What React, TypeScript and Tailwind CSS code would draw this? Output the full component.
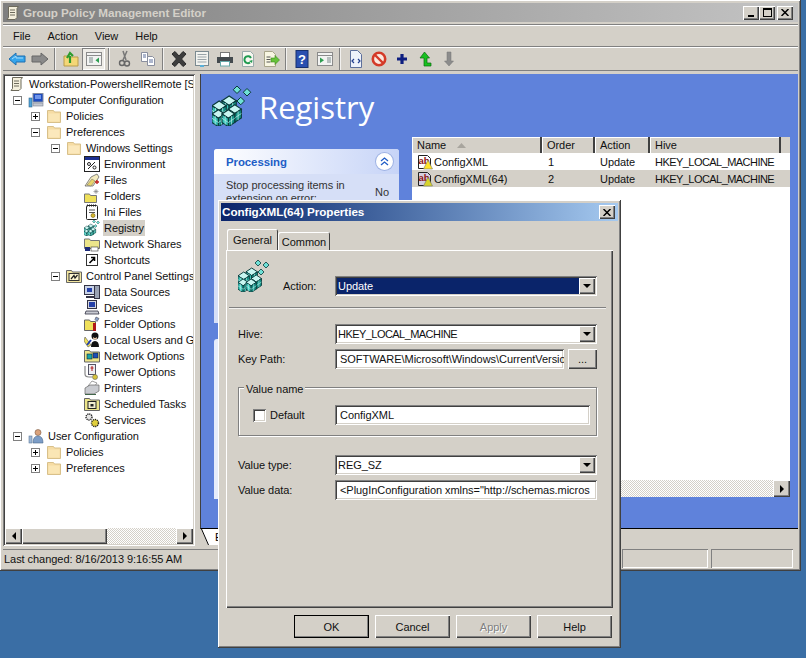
import React from "react";

const raised = "shadow-[inset_1px_1px_0_#fff,inset_-1px_-1px_0_#404040,inset_-2px_-2px_0_#808080]";
const sunken = "shadow-[inset_1px_1px_0_#808080,inset_-1px_-1px_0_#fff,inset_2px_2px_0_#404040,inset_-2px_-2px_0_#d4d0c8]";
const dither = "bg-[repeating-conic-gradient(#d4d0c8_0_25%,#fff_0_50%)] bg-[length:2px_2px]";

function Cube({ x, y, s = 1 }: { x: number; y: number; s?: number }) {
  return (
    <g transform={`translate(${x} ${y}) scale(${s})`} stroke="#0a3a3a" strokeWidth={0.5}>
      <path d="M0 2 L3 0 L6 2 L3 4 Z" fill="#c8f6f1" />
      <path d="M0 2 L3 4 V8 L0 6 Z" fill="#38c4b8" />
      <path d="M6 2 L3 4 V8 L6 6 Z" fill="#149084" />
      <path d="M1.5 3 V7 M0 4 L3 6 M4.5 3 V7 M6 4 L3 6" stroke="#b8f2ec" strokeWidth={0.35} fill="none" />
    </g>
  );
}

function RegistryIcon({ size = 16 }: { size?: number }) {
  return (
    <svg width={size} height={size} viewBox="0 0 32 32" className="shrink-0">
      <g stroke="#0a3a3a" strokeWidth={0.8}>
        <path d="M17 3 L20 0 L23 3 L20 6 Z" fill="#6fe0d6" />
        <path d="M25 5 L28 2 L31 5 L28 8 Z" fill="#6fe0d6" />
        <path d="M20 12 L23 9 L26 12 L23 15 Z" fill="#6fe0d6" />
      </g>
      <Cube x={8} y={8} s={1.9} />
      <Cube x={0} y={12} s={1.9} />
      <Cube x={13} y={15} s={1.75} />
      <Cube x={0} y={19} s={1.7} />
      <Cube x={8} y={19} s={1.7} />
    </svg>
  );
}

function Folder({ open }: { open?: boolean }) {
  return (
    <svg width="16" height="16" viewBox="0 0 16 16" className="shrink-0">
      <path d="M1.5 2.5 h6 l1 1.5 h6 v10.5 h-13 z" fill="#f6dca4" stroke="#d8c08a" />
      <path d="M2.5 5.5 h11 v8 h-11 z" fill={open ? "#fbe8bc" : "#fae6b5"} />
    </svg>
  );
}

function Expander({ open }: { open: boolean }) {
  return (
    <span className="relative flex h-[9px] w-[9px] shrink-0 items-center justify-center border border-[#808080] bg-white">
      <span className="absolute h-px w-[5px] bg-black" />
      {!open && <span className="absolute h-[5px] w-px bg-black" />}
    </span>
  );
}

function Scroll() {
  return (
    <svg width="16" height="16" viewBox="0 0 16 16" className="shrink-0">
      <path d="M3.5 1.5 h10 l-1.5 2 v9 l-2 2 h-8 l1.5 -2 z" fill="#f4efdc" stroke="#6d6a5c" />
      <path d="M5 5 h5 M5 7.5 h5 M5 10 h5" stroke="#6d6a5c" />
    </svg>
  );
}

function Computer({ user }: { user?: boolean }) {
  return (
    <svg width="16" height="16" viewBox="0 0 16 16" className="shrink-0">
      {user ? (
        <>
          <circle cx="10" cy="4.5" r="3" fill="#d9a27c" stroke="#7a5a44" strokeWidth="0.6" />
          <path d="M5 15 q0 -7 5 -7 q5 0 5 7 z" fill="#7c9dc7" stroke="#49688c" strokeWidth="0.6" />
          <rect x="1" y="8" width="3" height="7" fill="#9db7d6" stroke="#607c9c" strokeWidth="0.6" />
        </>
      ) : (
        <>
          <rect x="5" y="1.5" width="10" height="8.5" fill="#1e4cc0" stroke="#808aa0" />
          <path d="M7 3 h6 v4 h-6z" fill="#6f95ea" />
          <rect x="5" y="11" width="10" height="3" fill="#c4c8d0" stroke="#7b8090" strokeWidth="0.6" />
          <rect x="1" y="6" width="3" height="9" fill="#4ea3d8" stroke="#33668c" strokeWidth="0.6" />
        </>
      )}
    </svg>
  );
}

type LeafKind = "env" | "files" | "folders" | "ini" | "reg" | "net" | "short" | "data" | "dev" | "fopt" | "users" | "nopt" | "popt" | "print" | "task" | "cpl" | "svc";

function Leaf({ kind }: { kind: LeafKind }) {
  const base = { width: 16, height: 16, viewBox: "0 0 16 16", className: "shrink-0" };
  switch (kind) {
    case "env":
      return (
        <svg {...base}>
          <rect x="0.5" y="0.5" width="15" height="15" fill="#fff" stroke="#222" />
          <rect x="1" y="1" width="14" height="3" fill="#1b2f8f" />
          <path d="M4 13 L11 6" stroke="#222" />
          <circle cx="5" cy="8" r="1.5" fill="none" stroke="#222" />
          <circle cx="10.5" cy="11.5" r="1.5" fill="none" stroke="#222" />
        </svg>
      );
    case "files":
      return (
        <svg {...base}>
          <path d="M1 14 L7 5 L13 2 L15 5 L9 14 Z" fill="#f5ecc0" stroke="#555" strokeWidth="0.7" />
          <path d="M3 13 L8 7 L11 9 L7 14 Z" fill="#e8d46a" stroke="#666" strokeWidth="0.5" />
          <path d="M11 10 h4 M13 8 v4" stroke="#c02020" strokeWidth="1.4" />
        </svg>
      );
    case "folders":
      return (
        <svg {...base}>
          <path d="M0.5 6 h5 l1 1.5 h6 v7 h-12 z" fill="#efe05a" stroke="#777" />
          <path d="M12 1 v5 M9.5 3.5 h5 M10.3 1.8 l3.4 3.4 M13.7 1.8 l-3.4 3.4" stroke="#888" strokeWidth="0.7" />
        </svg>
      );
    case "ini":
      return (
        <svg {...base}>
          <rect x="2.5" y="1.5" width="11" height="14" rx="1" fill="#fff" stroke="#222" />
          <path d="M3 1.5 h10" stroke="#222" strokeDasharray="1 1" strokeWidth="2" />
          <path d="M5 6 h6 M5 8.5 h6" stroke="#555" />
          <circle cx="9" cy="11.5" r="2" fill="#d8b82c" stroke="#6d5a10" strokeWidth="0.6" />
        </svg>
      );
    case "reg":
      return <RegistryIcon />;
    case "net":
      return (
        <svg {...base}>
          <path d="M0.5 3 h5 l1 1.5 h9 v8 h-15 z" fill="#ece58a" stroke="#777" />
          <rect x="1" y="11" width="5" height="4" fill="#1d2b7a" />
          <rect x="7" y="11" width="7" height="4" fill="#fff" stroke="#333" strokeWidth="0.6" />
        </svg>
      );
    case "short":
      return (
        <svg {...base}>
          <rect x="2.5" y="2.5" width="11" height="11" fill="#fff" stroke="#333" />
          <path d="M5.5 11 L10 6.5 M7 5.5 h3.5 v3.5" stroke="#000" strokeWidth="1.6" fill="none" />
        </svg>
      );
    case "data":
      return (
        <svg {...base}>
          <rect x="0.5" y="1.5" width="10" height="9" fill="#c9d3e8" stroke="#334" />
          <rect x="3" y="4" width="5" height="4" fill="#2440a8" />
          <rect x="10.5" y="1.5" width="5" height="13" fill="#9aa3b4" stroke="#334" />
          <path d="M2 13 h8" stroke="#334" strokeWidth="2" />
        </svg>
      );
    case "dev":
      return (
        <svg {...base}>
          <rect x="3.5" y="0.5" width="9" height="8" fill="#d5d7df" stroke="#334" />
          <rect x="5" y="2" width="6" height="5" fill="#2440a8" />
          <path d="M2 11 h12 l1 3 h-14 z" fill="#c8cad2" stroke="#334" strokeWidth="0.8" />
        </svg>
      );
    case "fopt":
      return (
        <svg {...base}>
          <path d="M0.5 4 h5 l1 1.5 h5 v9 h-11 z" fill="#efe05a" stroke="#666" />
          <path d="M12 1 l3 1.5 l-2 3 l-2 -2 z" fill="#8aa3c8" stroke="#445" strokeWidth="0.6" />
          <rect x="9" y="7" width="3" height="8" fill="#b01818" />
        </svg>
      );
    case "users":
      return (
        <svg {...base}>
          <path d="M1 5 L7 13 L4 15 L0 9 z" fill="#efe05a" stroke="#555" strokeWidth="0.6" />
          <circle cx="11" cy="4" r="3.5" fill="#111" />
          <path d="M7 15 q0 -6 4 -6 q4 0 4 6 z" fill="#111" />
          <path d="M9 5 q2 2 4 0 v1.5 q-2 2 -4 0z" fill="#e8c7a8" />
          <path d="M3 13 l4 -5" stroke="#2440a8" strokeWidth="2" />
        </svg>
      );
    case "nopt":
      return (
        <svg {...base}>
          <path d="M0.5 2.5 h5 l1 1.5 h9 v10 h-15 z" fill="#ece58a" stroke="#666" />
          <rect x="3" y="6" width="5" height="5" fill="#1aa5a5" stroke="#123" strokeWidth="0.6" />
          <rect x="9" y="5" width="5" height="5" fill="#1d4db5" stroke="#123" strokeWidth="0.6" />
        </svg>
      );
    case "popt":
      return (
        <svg {...base}>
          <path d="M1 2 v8 q0 3 4 3 h3" stroke="#888" fill="none" strokeWidth="1.2" />
          <rect x="4.5" y="0.5" width="7" height="10" fill="#eeeef2" stroke="#556" />
          <path d="M8 2 v5 M6.5 4 h3" stroke="#b01818" />
          <circle cx="11" cy="13" r="2.5" fill="#d8c33c" stroke="#665" strokeWidth="0.6" />
        </svg>
      );
    case "print":
      return (
        <svg {...base}>
          <path d="M4 6 L8 1 L13 3 L10 7 z" fill="#fff" stroke="#777" strokeWidth="0.7" />
          <path d="M1 8 L6 5 H15 V11 L10 14 H1 Z" fill="#c9cbd0" stroke="#666" strokeWidth="0.7" />
          <path d="M1 14.5 h11" stroke="#40664a" />
        </svg>
      );
    case "task":
      return (
        <svg {...base}>
          <path d="M0.5 2.5 h5 l1 1.5 h9 v10.5 h-15 z" fill="#ece58a" stroke="#666" />
          <rect x="4" y="5.5" width="8" height="7" fill="#f2efd0" stroke="#222" />
          <rect x="6.5" y="8" width="3" height="2.5" fill="#222" />
        </svg>
      );
    case "cpl":
      return (
        <svg {...base}>
          <path d="M0.5 2.5 h5 l1 1.5 h9 v10.5 h-15 z" fill="#f3e6a0" stroke="#666" />
          <rect x="3" y="5.5" width="10" height="7" fill="#fff7d0" stroke="#333" />
          <path d="M5 11 L8 7.5 L9 10 L11.5 7" stroke="#222" fill="none" strokeWidth="1.2" />
        </svg>
      );
    case "svc":
      return (
        <svg {...base}>
          <circle cx="5" cy="5" r="3" fill="#e6e6e6" stroke="#222" strokeWidth="1.4" strokeDasharray="1.2 0.8" />
          <circle cx="11" cy="11" r="3.5" fill="#e0cf3c" stroke="#222" strokeWidth="1.4" strokeDasharray="1.2 0.8" />
        </svg>
      );
  }
}

function Row({ indent, expander, icon, label, selected }: { indent: string; expander?: boolean; icon: React.ReactNode; label: string; selected?: boolean }) {
  return (
    <div className={`flex h-4 items-center whitespace-nowrap ${indent}`}>
      {expander !== undefined && (
        <span className="mr-[6px]">
          <Expander open={expander} />
        </span>
      )}
      {icon}
      <span className={`ml-[3px] px-px ${selected ? "bg-[#d4d0c8]" : ""}`}>{label}</span>
    </div>
  );
}

function Arrow({ dir }: { dir: "l" | "r" | "d" }) {
  const d = dir === "l" ? "M5 0 V8 L1 4 Z" : dir === "r" ? "M1 0 V8 L5 4 Z" : "M0 1 H8 L4 5 Z";
  return (
    <svg width={dir === "d" ? 8 : 6} height={dir === "d" ? 6 : 8} viewBox={dir === "d" ? "0 0 8 6" : "0 0 6 8"}>
      <path d={d} fill="#000" />
    </svg>
  );
}

function SBtn({ dir, w = "w-[17px]" }: { dir: "l" | "r" | "d"; w?: string }) {
  return <div className={`flex shrink-0 items-center justify-center bg-[#d4d0c8] ${w} ${raised}`}><Arrow dir={dir} /></div>;
}

const Sep = () => (
  <div className="flex h-[22px] w-2 shrink-0 justify-center">
    <div className="h-full w-[2px] border-l border-[#808080] bg-white/70" />
  </div>
);

const Tb = ({ children, active }: { children: React.ReactNode; active?: boolean }) => (
  <div className={`flex h-[22px] w-[23px] shrink-0 items-center justify-center ${active ? "bg-[#eeece7] shadow-[inset_1px_1px_0_#808080,inset_-1px_-1px_0_#fff]" : ""}`}>{children}</div>
);

const Ico = ({ children }: { children: React.ReactNode }) => (
  <svg width="18" height="18" viewBox="0 0 18 18">{children}</svg>
);

function Toolbar() {
  return (
    <div className="flex h-[23px] items-center pl-[2px]">
      <Tb><Ico><path d="M1 9 L8 3 V6 H17 V12 H8 V15 Z" fill="#35a5ec" stroke="#1f6fb0" /><path d="M4 9 L8 6 V8 H15" stroke="#a8dcfa" fill="none" /></Ico></Tb>
      <Tb><Ico><path d="M17 9 L10 3 V6 H1 V12 H10 V15 Z" fill="#8a8a8a" stroke="#666" /></Ico></Tb>
      <Sep />
      <Tb><Ico><path d="M2 6 h5 l1 1 h8 v9 h-14 z" fill="#f4d777" stroke="#b99c4c" /><path d="M8 13 V6 M5 8 L8 3 L11 6" stroke="#2c9c2c" strokeWidth="2.2" fill="none" /></Ico></Tb>
      <Tb active><Ico><rect x="1.5" y="2.5" width="15" height="13" fill="#f2f3f2" stroke="#8b8b8b" /><path d="M1.5 5.5 h15" stroke="#8b8b8b" /><path d="M4 8 h4 M4 10 h4 M4 12 h4" stroke="#7a8a8a" /><path d="M14 7.5 V13 L10.5 10.2 Z" fill="#2d9d50" /></Ico></Tb>
      <Sep />
      <Tb><Ico><path d="M11 1 L7 10 M7 1 L10 10" stroke="#777" strokeWidth="1.5" /><circle cx="6" cy="13" r="2.5" fill="none" stroke="#666" strokeWidth="1.4" /><circle cx="11" cy="13.5" r="2.5" fill="none" stroke="#666" strokeWidth="1.4" /></Ico></Tb>
      <Tb><Ico><path d="M2.5 2.5 h6 v9 h-6 z" fill="#fff" stroke="#8a8f9f" /><path d="M8.5 6.5 h5 l2 2 v7 h-7 z" fill="#fff" stroke="#8a8f9f" /><path d="M4 5 h3 M4 7 h3 M10 10 h4 M10 12 h4" stroke="#5d6f9b" /></Ico></Tb>
      <Sep />
      <Tb><Ico><path d="M2 4 L5 1.5 L9 6 L13 1.5 L16 4 L11.5 9 L16 14 L13 16.5 L9 12 L5 16.5 L2 14 L6.5 9 Z" fill="#3d3d3d" stroke="#2a2a2a" /></Ico></Tb>
      <Tb><Ico><rect x="2.5" y="1.5" width="13" height="14" fill="#f3f4f0" stroke="#7b8a90" /><path d="M4.5 4.5 h9 M4.5 7 h9 M4.5 9.5 h9 M4.5 12 h9" stroke="#99a3a8" /><rect x="7" y="15" width="4" height="2" fill="#59b0d8" /></Ico></Tb>
      <Tb><Ico><rect x="4.5" y="2.5" width="9" height="5" fill="#fff" stroke="#777" /><rect x="1" y="7" width="16" height="6" fill="#444a4e" /><rect x="4.5" y="11.5" width="9" height="4.5" fill="#fff" stroke="#6aa" /></Ico></Tb>
      <Tb><Ico><path d="M3.5 1.5 h8 l3 3 v12 h-11 z" fill="#f7f7f0" stroke="#9aa" /><path d="M12 8 a3.5 3.5 0 1 0 -1 4.5" stroke="#1f9a4f" strokeWidth="2" fill="none" /><path d="M10 11 l3 2 l.5 -3 z" fill="#1f9a4f" /></Ico></Tb>
      <Tb><Ico><path d="M2.5 1.5 h8 l3 3 v12 h-11 z" fill="#f8f6e2" stroke="#a8a58a" /><path d="M4.5 7 h4 M4.5 9.5 h4 M4.5 12 h4" stroke="#555" /><path d="M9 8 h4 V5.5 L17.5 10 L13 14.5 V12 H9 Z" fill="#66c23a" stroke="#3c8a1c" strokeWidth="0.6" /></Ico></Tb>
      <Sep />
      <Tb><Ico><rect x="3" y="0.5" width="12" height="17" fill="#2a4fb0" stroke="#17306f" /><text x="9" y="14" textAnchor="middle" fontFamily="Liberation Sans" fontWeight="700" fontSize="13" fill="#fff">?</text></Ico></Tb>
      <Tb><Ico><rect x="1.5" y="2.5" width="15" height="13" fill="#f2f3f2" stroke="#8b8b8b" /><path d="M1.5 5.5 h15" stroke="#8b8b8b" /><path d="M11 8 h4 M11 10 h4 M11 12 h4" stroke="#7a8a8a" /><path d="M4 7.5 V13 L8 10.2 Z" fill="#2d9d50" /></Ico></Tb>
      <Sep />
      <Tb><Ico><path d="M3.5 0.5 h7 l4 4 v13 h-11 z" fill="#eef2fa" stroke="#5d6f9b" /><path d="M7 9 L5 11 L7 13 M11 9 L13 11 L11 13" stroke="#23408f" strokeWidth="1.2" fill="none" /></Ico></Tb>
      <Tb><Ico><circle cx="9" cy="9" r="6.2" fill="#fbe9e0" stroke="#d43a28" strokeWidth="2.6" /><path d="M5 5 L13 13" stroke="#d43a28" strokeWidth="2.4" /></Ico></Tb>
      <Tb><Ico><path d="M9 4 V14 M4 9 H14" stroke="#0e1e80" strokeWidth="3.2" /></Ico></Tb>
      <Tb><Ico><path d="M8.5 2 L13.5 8 H11 V13 H15 V16 H8 V8 H4 Z" fill="#18c020" stroke="#0c6a10" strokeWidth="0.7" /></Ico></Tb>
      <Tb><Ico><path d="M8 2 H12 V11 H14.5 L10 16 L5.5 11 H8 Z" fill="#8c8c8c" stroke="#777" strokeWidth="0.5" /></Ico></Tb>
    </div>
  );
}

function ABIcon({ selected }: { selected?: boolean }) {
  return (
    <svg width="16" height="16" viewBox="0 0 16 16" className="shrink-0">
      <path d="M1.5 1.5 h9 l3 3 v10 h-12 z" fill={selected ? "#d5cfe0" : "#fff"} stroke="#222" />
      <text x="1.5" y="10" fontFamily="Liberation Sans" fontWeight="700" fontSize="9.5" fill="#8c1010">ab</text>
      <path d="M11 6 L15.5 15 H6.5 Z" fill={selected ? "#d8d42c" : "#ffe42a"} stroke="#776" strokeWidth="0.6" />
    </svg>
  );
}

function Head({ w, children }: { w: string; children?: React.ReactNode }) {
  return (
    <div className={`flex h-full shrink-0 items-center border-r-2 border-r-[#404040] pl-[5px] ${w} shadow-[inset_1px_1px_0_#fff]`}>
      {children}
    </div>
  );
}

function TableRow({ selected }: { selected?: boolean }) {
  return (
    <div className={`flex h-[17px] items-center ${selected ? "bg-[#d4d0c8]" : ""}`}>
      <div className="flex w-[130px] shrink-0 items-center pl-[5px]">
        <ABIcon selected={selected} />
        <span className="ml-px">{selected ? "ConfigXML(64)" : "ConfigXML"}</span>
      </div>
      <div className="w-[53px] shrink-0 pl-[6px]">{selected ? "2" : "1"}</div>
      <div className="w-[55px] shrink-0 pl-[5px]">Update</div>
      <div className="pl-[5px] tracking-[-0.55px]">HKEY_LOCAL_MACHINE</div>
    </div>
  );
}

function Combo({ value, cls, selected, valueCls = "" }: { value: string; cls: string; selected?: boolean; valueCls?: string }) {
  return (
    <div className={`flex items-stretch bg-white p-[2px] ${cls} ${sunken}`}>
      <div className={`flex min-w-0 flex-1 items-center pl-px ${valueCls} ${selected ? "bg-[#0a246a] text-white" : ""}`}>{value}</div>
      <SBtn dir="d" w="w-[16px]" />
    </div>
  );
}

const TextBox = ({ value, cls }: { value: string; cls: string }) => (
  <div className={`flex items-center overflow-hidden whitespace-nowrap bg-white pl-[5px] ${cls} ${sunken}`}>{value}</div>
);

const DBtn = ({ label, cls = "", disabled }: { label: string; cls?: string; disabled?: boolean }) => (
  <div className={`flex h-[23px] w-[75px] shrink-0 items-center justify-center bg-[#d4d0c8] ${raised} ${cls} ${disabled ? "text-[#808080] [text-shadow:1px_1px_0_#fff]" : ""}`}>{label}</div>
);

function WinBtn({ children, cls = "" }: { children: React.ReactNode; cls?: string }) {
  return <div className={`flex h-[14px] w-4 shrink-0 items-center justify-center bg-[#d4d0c8] ${raised} ${cls}`}>{children}</div>;
}

const CloseGlyph = () => (
  <svg width="8" height="7" viewBox="0 0 8 7"><path d="M0.5 0 L7.5 7 M7.5 0 L0.5 7" stroke="#000" strokeWidth="1.5" /></svg>
);

export default function App() {
  return (
    <div className="relative h-[658px] w-[806px] overflow-hidden bg-[#3a6ea5] text-[11px] leading-4 tracking-[-0.05px] text-[#111] [font-family:'Liberation_Sans',sans-serif]">
      {/* Main window */}
      <div className="flex h-[571px] w-[801px] flex-col bg-[#d4d0c8] p-[3px] shadow-[inset_-1px_-1px_0_#404040,inset_1px_1px_0_#fff,inset_-2px_-2px_0_#808080]">
        <div className="flex h-[19px] shrink-0 items-center bg-gradient-to-r from-[#7f7f7f] to-[#c4c4c4] pl-[2px] pr-[5px]">
          <Scroll />
          <span className="ml-[2px] text-[11.7px] font-bold text-[#d4d0c8]">Group Policy Management Editor</span>
          <div className="ml-auto flex">
            <WinBtn><span className="mt-[6px] h-[2px] w-[6px] bg-black" /></WinBtn>
            <WinBtn><span className="h-[9px] w-[9px] border border-t-2 border-black" /></WinBtn>
            <WinBtn cls="ml-[2px]"><CloseGlyph /></WinBtn>
          </div>
        </div>
        <div className="mt-[2px] flex h-[23px] shrink-0 items-center gap-[17px] border-y border-[#808080] pl-[10px] shadow-[inset_0_1px_0_#fff]">
          <span>File</span><span>Action</span><span>View</span><span>Help</span>
        </div>
        <div className="shrink-0 border-b border-[#808080] shadow-[inset_0_1px_0_#fff]">
          <Toolbar />
        </div>
        <div className="mt-[3px] flex min-h-0 flex-1 gap-[5px]">
          {/* Tree */}
          <div className={`flex w-[192px] shrink-0 flex-col bg-white p-[2px] ${sunken}`}>
            <div className="min-h-0 flex-1 overflow-hidden">
              <Row indent="pl-[4px]" icon={<Scroll />} label="Workstation-PowershellRemote [SI" />
              <Row indent="pl-[8px]" expander={true} icon={<Computer />} label="Computer Configuration" />
              <Row indent="pl-[26px]" expander={false} icon={<Folder />} label="Policies" />
              <Row indent="pl-[26px]" expander={true} icon={<Folder open />} label="Preferences" />
              <Row indent="pl-[46px]" expander={true} icon={<Folder open />} label="Windows Settings" />
              <Row indent="pl-[79px]" icon={<Leaf kind="env" />} label="Environment" />
              <Row indent="pl-[79px]" icon={<Leaf kind="files" />} label="Files" />
              <Row indent="pl-[79px]" icon={<Leaf kind="folders" />} label="Folders" />
              <Row indent="pl-[79px]" icon={<Leaf kind="ini" />} label="Ini Files" />
              <Row indent="pl-[79px]" icon={<Leaf kind="reg" />} label="Registry" selected />
              <Row indent="pl-[79px]" icon={<Leaf kind="net" />} label="Network Shares" />
              <Row indent="pl-[79px]" icon={<Leaf kind="short" />} label="Shortcuts" />
              <Row indent="pl-[46px]" expander={true} icon={<Leaf kind="cpl" />} label="Control Panel Settings" />
              <Row indent="pl-[79px]" icon={<Leaf kind="data" />} label="Data Sources" />
              <Row indent="pl-[79px]" icon={<Leaf kind="dev" />} label="Devices" />
              <Row indent="pl-[79px]" icon={<Leaf kind="fopt" />} label="Folder Options" />
              <Row indent="pl-[79px]" icon={<Leaf kind="users" />} label="Local Users and Groups" />
              <Row indent="pl-[79px]" icon={<Leaf kind="nopt" />} label="Network Options" />
              <Row indent="pl-[79px]" icon={<Leaf kind="popt" />} label="Power Options" />
              <Row indent="pl-[79px]" icon={<Leaf kind="print" />} label="Printers" />
              <Row indent="pl-[79px]" icon={<Leaf kind="task" />} label="Scheduled Tasks" />
              <Row indent="pl-[79px]" icon={<Leaf kind="svc" />} label="Services" />
              <Row indent="pl-[8px]" expander={true} icon={<Computer user />} label="User Configuration" />
              <Row indent="pl-[26px]" expander={false} icon={<Folder />} label="Policies" />
              <Row indent="pl-[26px]" expander={false} icon={<Folder />} label="Preferences" />
            </div>
            <div className="flex h-4 shrink-0">
              <SBtn dir="l" />
              <div className={`w-[85px] shrink-0 bg-[#d4d0c8] ${raised}`} />
              <div className={`min-w-0 flex-1 ${dither}`} />
              <SBtn dir="r" />
            </div>
          </div>
          {/* Right pane */}
          <div className="flex min-w-0 flex-1 flex-col">
            <div className="relative flex min-h-0 flex-1 flex-col border-b border-l border-b-black border-l-[#404040] bg-[#5f82db] pl-[11px] pr-[8px]">
              <div className="flex h-[75px] shrink-0 items-center">
                <div className="mt-[-11px] shrink-0">
                  <RegistryIcon size={40} />
                </div>
                <span className="ml-[7px] mt-[-8px] text-[31px] leading-none tracking-normal text-white [font-family:'Open_Sans','Noto_Sans',sans-serif]">Registry</span>
              </div>
              <div className="ml-[2px] flex min-h-0 flex-1">
                <div className="w-[185px] shrink-0">
                  <div className="h-[174px] rounded-t-[3px] bg-[#d6dff7]">
                    <div className="flex h-[25px] items-center justify-between rounded-t-[3px] bg-gradient-to-r from-white to-[#c7d4f7] pl-[12px] pr-[6px]">
                      <span className="text-[11.4px] font-bold text-[#215dc6]">Processing</span>
                      <span className="flex h-[17px] w-[17px] items-center justify-center rounded-full bg-white shadow-[0_0_0_1px_#9fb3e4]">
                        <svg width="9" height="9" viewBox="0 0 9 9"><path d="M1 4 L4.5 1 L8 4 M1 8 L4.5 5 L8 8" stroke="#215dc6" strokeWidth="1.3" fill="none" /></svg>
                      </span>
                    </div>
                    <div className="flex items-center justify-between pl-[12px] pr-[10px] pt-[5px] leading-[13px] text-[#333]">
                      <span>Stop processing items in<br />extension on error:</span>
                      <span>No</span>
                    </div>
                  </div>
                  <div className="mt-[16px] h-[160px] rounded-t-[3px] bg-[#e6ecfb]" />
                </div>
                <div className="ml-[13px] mt-[-12px] flex h-[360px] min-w-0 flex-1 flex-col bg-white">
                  <div className="flex h-4 shrink-0 bg-[#d4d0c8]">
                    <Head w="w-[130px]">
                      Name
                      <svg width="9" height="5" viewBox="0 0 9 5" className="ml-[11px]"><path d="M0 5 L4.5 0 L9 5 Z" fill="#a8a59e" /></svg>
                    </Head>
                    <Head w="w-[53px]">Order</Head>
                    <Head w="w-[55px]">Action</Head>
                    <Head w="w-[131px]">Hive</Head>
                  </div>
                  <TableRow />
                  <TableRow selected />
                  <div className="flex-1" />
                  <div className="flex h-[17px] shrink-0">
                    <SBtn dir="l" />
                    <div className={`min-w-0 flex-1 ${dither}`} />
                    <SBtn dir="r" />
                  </div>
                </div>
              </div>
            </div>
            <div className="flex h-[17px] shrink-0 items-start pl-px">
              <svg width="9" height="16" viewBox="0 0 9 16" className="shrink-0">
                <path d="M0 0 H9 V16 H7 Z" fill="#fff" />
                <path d="M0.5 0 L7.5 16" stroke="#000" />
              </svg>
              <div className="flex h-4 w-[20px] items-center overflow-hidden bg-white pl-[5px] text-black">Extended</div>
            </div>
          </div>
        </div>
        <div className="mt-[3px] flex h-[19px] shrink-0 items-stretch gap-[3px]">
          <div className="flex w-[616px] items-center pl-px shadow-[inset_0_1px_0_#808080]">Last changed: 8/16/2013 9:16:55 AM</div>
          <div className="w-[86px] shadow-[inset_1px_1px_0_#808080,inset_-1px_-1px_0_#fff]" />
          <div className="w-[82px] shadow-[inset_1px_1px_0_#808080,inset_-1px_-1px_0_#fff]" />
        </div>
      </div>

      {/* Dialog */}
      <div className="absolute left-[218px] top-[200px] flex h-[448px] w-[403px] flex-col bg-[#d4d0c8] p-[3px] shadow-[inset_-1px_-1px_0_#404040,inset_1px_1px_0_#fff,inset_-2px_-2px_0_#808080]">
        <div className="flex h-[18px] shrink-0 items-center bg-gradient-to-r from-[#0a246a] to-[#a6caf0] pl-px pr-[3px]">
          <span className="text-[11.7px] font-bold text-white">ConfigXML(64) Properties</span>
          <WinBtn cls="ml-auto"><CloseGlyph /></WinBtn>
        </div>
        <div className="relative mt-[8px] flex h-[21px] shrink-0 items-end pl-[6px]">
          <div className="relative z-10 flex h-[21px] w-[51px] items-start justify-center rounded-t-[2px] bg-[#d4d0c8] pt-[3px] shadow-[inset_1px_1px_0_#fff,inset_-1px_0_0_#404040]">General</div>
          <div className="flex h-[18px] w-[52px] items-start justify-center rounded-t-[2px] pt-[2px] shadow-[inset_1px_1px_0_#fff,inset_-1px_0_0_#404040]">Common</div>
        </div>
        <div className="mx-[5px] flex h-[358px] shrink-0 flex-col pl-[12px] pr-[7px] shadow-[inset_1px_1px_0_#fff,inset_-1px_-1px_0_#404040,inset_-2px_-2px_0_#808080]">
          <div className="mt-[10px] flex h-[47px] shrink-0">
            <RegistryIcon size={32} />
            <div className="ml-[13px] mt-[16px] flex h-5 w-[52px] items-center">Action:</div>
            <Combo value="Update" selected cls="mt-[16px] h-[20px] w-[262px]" />
          </div>
          <div className="-ml-[9px] h-[2px] shrink-0 border-t border-[#808080] bg-white/70" />
          <div className="mt-[15px] flex h-5 shrink-0 items-center">
            <span className="w-[97px]">Hive:</span>
            <Combo value="HKEY_LOCAL_MACHINE" valueCls="tracking-[-0.55px]" cls="h-5 w-[262px]" />
          </div>
          <div className="mt-[5px] flex h-5 shrink-0 items-center">
            <span className="w-[97px]">Key Path:</span>
            <TextBox value="SOFTWARE\Microsoft\Windows\CurrentVersio" cls="h-5 w-[229px]" />
            <div className={`ml-[4px] flex h-5 w-[29px] items-center justify-center bg-[#d4d0c8] ${raised}`}>...</div>
          </div>
          <div className="relative mt-[18px] flex h-[49px] w-[359px] shrink-0 items-center border border-[#808080] pl-[14px] pt-[7px] shadow-[inset_1px_1px_0_#fff,1px_1px_0_#fff]">
            <span className="absolute left-[5px] top-[-7px] bg-[#d4d0c8] px-[2px]">Value name</span>
            <span className={`h-[13px] w-[13px] shrink-0 bg-white ${sunken}`} />
            <span className="ml-[4px] w-[65px]">Default</span>
            <TextBox value="ConfigXML" cls="h-5 w-[255px]" />
          </div>
          <div className="mt-[19px] flex h-5 shrink-0 items-center">
            <span className="w-[97px]">Value type:</span>
            <Combo value="REG_SZ" cls="h-5 w-[262px]" />
          </div>
          <div className="mt-[5px] flex h-5 shrink-0 items-center">
            <span className="w-[97px]">Value data:</span>
            <TextBox value='<PlugInConfiguration xmlns="http://schemas.micros' cls="h-5 w-[262px]" />
          </div>
        </div>
        <div className="mt-[7px] flex justify-end gap-[6px] pr-[6px]">
          <DBtn label="OK" cls="outline outline-1 -outline-offset-1 outline-black" />
          <DBtn label="Cancel" />
          <DBtn label="Apply" disabled />
          <DBtn label="Help" />
        </div>
      </div>
    </div>
  );
}
